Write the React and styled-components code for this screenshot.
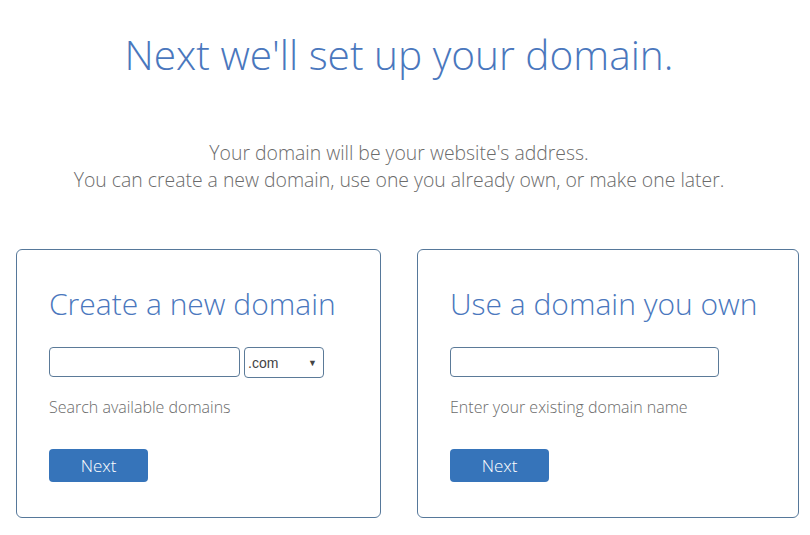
import React from "react";
import styled, { createGlobalStyle } from "styled-components";

const Global = createGlobalStyle`
  html, body { margin: 0; padding: 0; background: #fff; }
  body { font-family: "Open Sans", "Liberation Sans", sans-serif; font-weight: 300; }
  * { box-sizing: border-box; }
`;

const Page = styled.div`
  width: 810px;
  height: 535px;
  overflow: hidden;
  padding-top: 28px;
`;

const Heading = styled.h1`
  margin: 0;
  text-align: center;
  font-size: 40.6px;
  font-weight: 300;
  line-height: 54px;
  color: #4a77bd;
  padding-right: 12px;
`;

const Intro = styled.p`
  margin: 57px 0 0;
  text-align: center;
  font-size: 19.4px;
  line-height: 27px;
  color: #6b6b6b;
  padding-right: 12px;
`;

const Cards = styled.div`
  display: grid;
  grid-template-columns: 365px 382px;
  column-gap: 36px;
  margin: 56px 0 0 16px;
`;

const Card = styled.section`
  height: 269px;
  border: 1px solid #56789a;
  border-radius: 6px;
  padding: 32px 32px 0;
`;

const CardTitle = styled.h2`
  margin: 0;
  font-size: 30px;
  font-weight: 300;
  line-height: 44px;
  color: #4a77bd;
`;

const Row = styled.div`
  display: flex;
  gap: 4px;
  height: 31px;
  margin-top: 21px;
  align-items: flex-start;
`;

const Input = styled.input`
  width: ${(p) => p.$w}px;
  height: 30px;
  border: 1px solid #5b7a98;
  border-radius: 4px;
  padding: 0 6px;
  font-family: inherit;
  font-size: 14px;
  outline: none;
`;

const Select = styled.div`
  position: relative;
  width: 80px;
  height: 31px;
  border: 1px solid #5b7a98;
  border-radius: 4px;
  display: flex;
  align-items: center;
  justify-content: space-between;
  padding: 0 6px 0 3px;
  font-family: "Liberation Sans", Arial, sans-serif;
  font-weight: 400;
  font-size: 14px;
  color: #444;
`;

const Caret = styled.span`
  font-size: 9px;
  color: #444;
`;

const Help = styled.p`
  margin: 18px 0 0;
  font-size: 16px;
  line-height: 22px;
  color: #6b6b6b;
`;

const Button = styled.button`
  display: block;
  margin-top: 31px;
  width: 99px;
  height: 33px;
  border: none;
  border-radius: 4px;
  background: #3674ba;
  color: #fff;
  font-family: inherit;
  font-weight: 300;
  font-size: 17px;
  padding: 0;
`;

export default function App() {
  return (
    <Page>
      <Global />
      <Heading>Next we'll set up your domain.</Heading>
      <Intro>
        Your domain will be your website's address.
        <br />
        You can create a new domain, use one you already own, or make one later.
      </Intro>
      <Cards>
        <Card>
          <CardTitle>Create a new domain</CardTitle>
          <Row>
            <Input $w={191} />
            <Select>
              <span>.com</span>
              <Caret>▼</Caret>
            </Select>
          </Row>
          <Help>Search available domains</Help>
          <Button>Next</Button>
        </Card>
        <Card>
          <CardTitle>Use a domain you own</CardTitle>
          <Row>
            <Input $w={269} />
          </Row>
          <Help>Enter your existing domain name</Help>
          <Button>Next</Button>
        </Card>
      </Cards>
    </Page>
  );
}
